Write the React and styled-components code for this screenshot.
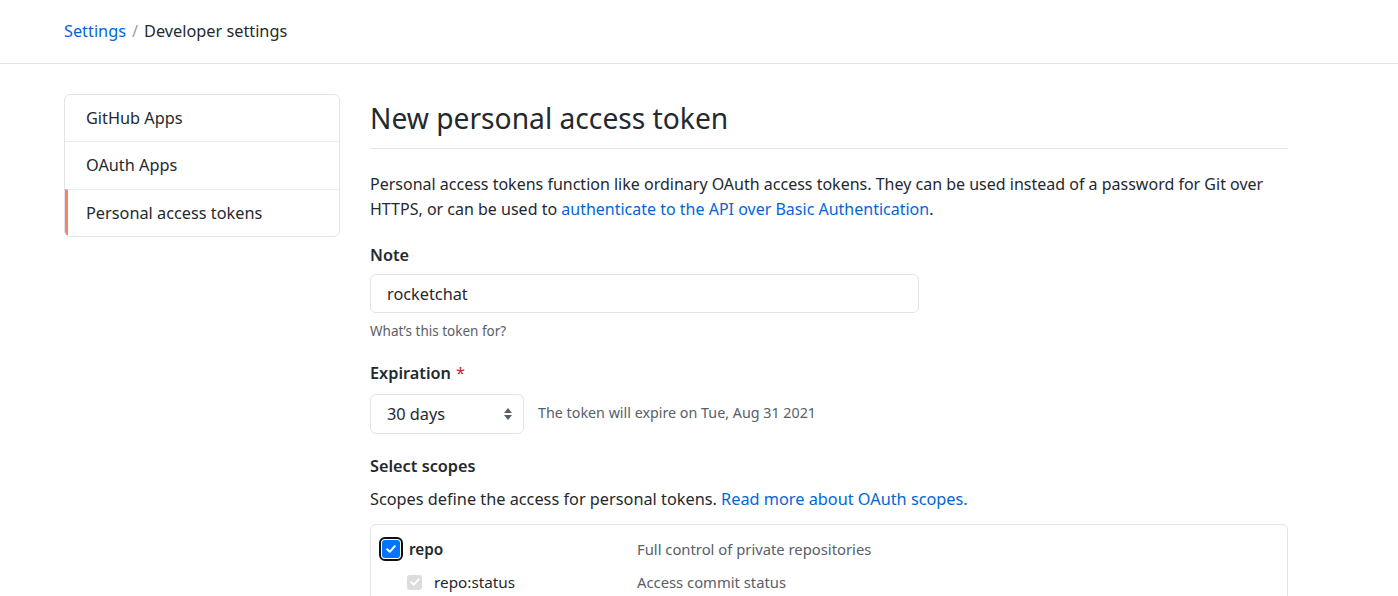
import React from "react";
import styled, { createGlobalStyle } from "styled-components";

const Global = createGlobalStyle`
  body {
    margin: 0;
    background: #fff;
    color: #24292e;
    font-family: "Noto Sans", "Open Sans", sans-serif;
  }
`;

const Header = styled.div`
  height: 64px;
  border-bottom: 1px solid #e1e4e8;
  display: flex;
  align-items: center;
  padding-left: 64px;
  padding-bottom: 2px;
  box-sizing: border-box;
  font-size: 16.3px;
`;

const Crumb = styled.a`
  color: #0366d6;
  text-decoration: none;
`;

const Sep = styled.span`
  color: #959da5;
  margin: 0 6px;
`;

const Layout = styled.div`
  display: flex;
  padding: 30px 0 0 64px;
  column-gap: 30px;
`;

const Menu = styled.nav`
  width: 276px;
  height: 143px;
  border: 1px solid #e1e4e8;
  border-radius: 6px;
  box-sizing: border-box;
  display: flex;
  flex-direction: column;
  overflow: hidden;
  flex-shrink: 0;
`;

const MenuItem = styled.a`
  height: 47px;
  display: flex;
  align-items: center;
  padding-left: ${(p) => (p.$active ? "18px" : "21px")};
  font-size: 16.3px;
  color: #24292e;
  border-left: ${(p) => (p.$active ? "3px solid #f9826c" : "none")};
  border-top: ${(p) => (p.$first ? "none" : "1px solid #eaecef")};
`;

const Main = styled.div`
  width: 918px;
`;

const Title = styled.h2`
  margin: 0;
  font-size: 28.2px;
  font-weight: 400;
  line-height: 40px;
  padding-top: 4px;
  padding-bottom: 10px;
  border-bottom: 1px solid #e1e4e8;
`;

const Lead = styled.p`
  margin: 23px 0 0;
  font-size: 16px;
  line-height: 25px;
  white-space: nowrap;
`;

const Link = styled.a`
  color: #0366d6;
  text-decoration: none;
`;

const Label = styled.div`
  margin-top: ${(p) => p.$top || "20px"};
  font-size: 16.3px;
  font-weight: 600;
  line-height: 24px;
`;

const Star = styled.span`
  color: #cb2431;
  font-weight: 400;
  margin-left: 5px;
`;

const Input = styled.div`
  margin-top: 7px;
  width: 549px;
  height: 39px;
  box-sizing: border-box;
  border: 1px solid #e1e4e8;
  border-radius: 6px;
  display: flex;
  align-items: center;
  padding-left: 16px;
  font-size: 16.3px;
`;

const Note = styled.div`
  font-size: 13.5px;
  color: #586069;
  margin-top: 9px;
`;

const SelectRow = styled.div`
  margin-top: 9px;
  display: flex;
  align-items: center;
  column-gap: 14px;
`;

const Select = styled.div`
  width: 154px;
  height: 40px;
  box-sizing: border-box;
  border: 1px solid #e1e4e8;
  border-radius: 6px;
  display: flex;
  align-items: center;
  justify-content: space-between;
  padding: 0 9px 0 16px;
  font-size: 16.3px;
`;

const Hint = styled.span`
  font-size: 14.3px;
  color: #586069;
  margin-top: -4px;
`;

const Text = styled.p`
  margin: 9px 0 0;
  font-size: 16.3px;
  line-height: 25px;
`;

const ScopeBox = styled.div`
  margin-top: 12px;
  border: 1px solid #e1e4e8;
  border-radius: 6px;
  height: 120px;
  padding: 11px 0 0 8px;
  box-sizing: border-box;
`;

const ScopeRow = styled.div`
  display: grid;
  grid-template-columns: ${(p) => (p.$child ? "27px 203px" : "30px 228px")} 1fr;
  align-items: center;
  height: ${(p) => (p.$child ? "40px" : "26px")};
  padding-left: ${(p) => (p.$child ? "28px" : "0")};
`;

const ScopeName = styled.span`
  font-size: 15.3px;
  font-weight: ${(p) => (p.$bold ? 600 : 400)};
`;

const ScopeDesc = styled.span`
  font-size: 14.8px;
  color: #586069;
`;

const Check = styled.span`
  width: ${(p) => (p.$disabled ? "15px" : "18px")};
  height: ${(p) => (p.$disabled ? "15px" : "18px")};
  border-radius: 3px;
  background: ${(p) => (p.$disabled ? "#dcdcdc" : "#0075ff")};
  outline: ${(p) => (p.$disabled ? "none" : "2px solid #101010")};
  outline-offset: 1px;
  display: flex;
  align-items: center;
  justify-content: center;
  margin-left: ${(p) => (p.$disabled ? "0" : "3px")};
`;

function CheckMark({ disabled }) {
  return (
    <Check $disabled={disabled}>
      <svg width="12" height="12" viewBox="0 0 12 12">
        <path
          d="M2.2 6.3 L4.8 8.8 L9.8 3.2"
          fill="none"
          stroke="#fff"
          strokeWidth="2"
          strokeLinecap="round"
          strokeLinejoin="round"
        />
      </svg>
    </Check>
  );
}

export default function App() {
  return (
    <>
      <Global />
      <Header>
        <Crumb>Settings</Crumb>
        <Sep>/</Sep>
        <span>Developer settings</span>
      </Header>
      <Layout>
        <Menu>
          <MenuItem $first>GitHub Apps</MenuItem>
          <MenuItem>OAuth Apps</MenuItem>
          <MenuItem $active>Personal access tokens</MenuItem>
        </Menu>
        <Main>
          <Title>New personal access token</Title>
          <Lead>
            Personal access tokens function like ordinary OAuth access tokens. They can be used instead of a
            password for Git over
            <br />
            HTTPS, or can be used to{" "}
            <Link>authenticate to the API over Basic Authentication</Link>.
          </Lead>
          <Label $top="21px">Note</Label>
          <Input>rocketchat</Input>
          <Note>What’s this token for?</Note>
          <Label $top="21px">
            Expiration<Star>*</Star>
          </Label>
          <SelectRow>
            <Select>
              30 days
              <svg width="12" height="16" viewBox="0 0 12 16">
                <path d="M6 2 L10 7 H2 Z" fill="#586069" />
                <path d="M6 14 L10 9 H2 Z" fill="#586069" />
              </svg>
            </Select>
            <Hint>The token will expire on Tue, Aug 31 2021</Hint>
          </SelectRow>
          <Label $top="20px">Select scopes</Label>
          <Text>
            Scopes define the access for personal tokens. <Link>Read more about OAuth scopes.</Link>
          </Text>
          <ScopeBox>
            <ScopeRow>
              <CheckMark />
              <ScopeName $bold>repo</ScopeName>
              <ScopeDesc>Full control of private repositories</ScopeDesc>
            </ScopeRow>
            <ScopeRow $child>
              <CheckMark disabled />
              <ScopeName>repo:status</ScopeName>
              <ScopeDesc>Access commit status</ScopeDesc>
            </ScopeRow>
          </ScopeBox>
        </Main>
      </Layout>
    </>
  );
}
